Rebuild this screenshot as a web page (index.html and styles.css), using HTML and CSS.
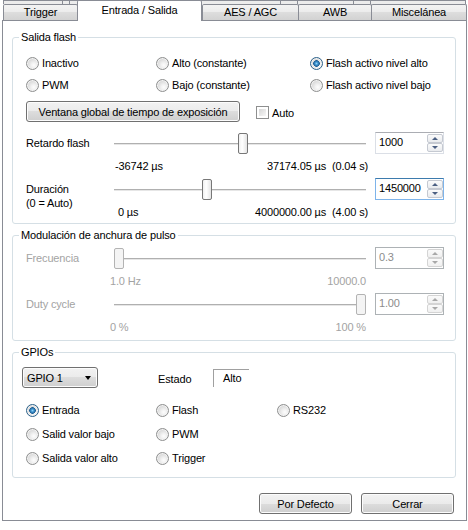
FILE: index.html
```html
<!DOCTYPE html>
<html lang="es">
<head>
  <meta charset="UTF-8" />
  <title>Entrada / Salida</title>
  <link rel="stylesheet" href="styles.css">
</head>
<body>

  <!-- Tabs -->
  <div class="tabbar">
    <div class="back-row">
      <span class="back-tab" style="width: 60px"></span>
      <span class="back-tab" style="width: 8px"></span>
      <span class="back-tab" style="width: 212px"></span>
      <span class="back-tab" style="width: 18px"></span>
      <span class="back-tab" style="width: 57px"></span>
      <span class="back-tab" style="width: 18px"></span>
      <span class="back-tab" style="width: 96px"></span>
    </div>
    <div class="tab-row">
      <div class="tab tab-trigger">Trigger</div>
      <div class="tab tab-active">Entrada / Salida</div>
      <div class="tab tab-aes">AES / AGC</div>
      <div class="tab tab-awb">AWB</div>
      <div class="tab tab-misc">Miscelánea</div>
    </div>
  </div>

  <div class="panel">

    <!-- Salida flash -->
    <div class="group group-flash">
      <div class="group-title">Salida flash</div>

      <div class="radio-grid flash-radios">
        <label class="radio"><span class="dot"></span>Inactivo</label>
        <label class="radio"><span class="dot"></span>Alto (constante)</label>
        <label class="radio"><span class="dot on"></span>Flash activo nivel alto</label>
        <label class="radio"><span class="dot"></span>PWM</label>
        <label class="radio"><span class="dot"></span>Bajo (constante)</label>
        <label class="radio"><span class="dot"></span>Flash activo nivel bajo</label>
      </div>

      <div class="button-row">
        <button class="btn btn-window">Ventana global de tiempo de exposición</button>
        <label class="check"><span class="box"></span>Auto</label>
      </div>

      <div class="slider-block first">
        <div class="slider-label">Retardo flash</div>
        <div class="slider-col">
          <div class="slider">
            <div class="track"></div>
            <div class="thumb" style="left: 124px"></div>
          </div>
          <div class="slider-values flash-values">
            <span>-36742 µs</span>
            <span>37174.05 µs&nbsp; (0.04 s)</span>
          </div>
        </div>
        <div class="spin">
          <span class="spin-value">1000</span>
          <span class="spin-buttons"><span class="spin-btn up"></span><span class="spin-btn down"></span></span>
        </div>
      </div>

      <div class="slider-block">
        <div class="slider-label">Duración<br>(0 = Auto)</div>
        <div class="slider-col">
          <div class="slider">
            <div class="track"></div>
            <div class="thumb" style="left: 88px"></div>
          </div>
          <div class="slider-values flash-values">
            <span class="zero">0 µs</span>
            <span>4000000.00 µs&nbsp; (4.00 s)</span>
          </div>
        </div>
        <div class="spin focused">
          <span class="spin-value">1450000</span>
          <span class="spin-buttons"><span class="spin-btn up"></span><span class="spin-btn down"></span></span>
        </div>
      </div>
    </div>

    <!-- PWM -->
    <div class="group group-pwm disabled">
      <div class="group-title">Modulación de anchura de pulso</div>

      <div class="slider-block first">
        <div class="slider-label">Frecuencia</div>
        <div class="slider-col">
          <div class="slider">
            <div class="track"></div>
            <div class="thumb" style="left: 0px"></div>
          </div>
          <div class="slider-values pwm-values">
            <span>1.0 Hz</span>
            <span>10000.0</span>
          </div>
        </div>
        <div class="spin">
          <span class="spin-value">0.3</span>
          <span class="spin-buttons"><span class="spin-btn up"></span><span class="spin-btn down"></span></span>
        </div>
      </div>

      <div class="slider-block">
        <div class="slider-label">Duty cycle</div>
        <div class="slider-col">
          <div class="slider">
            <div class="track"></div>
            <div class="thumb" style="left: 242px"></div>
          </div>
          <div class="slider-values pwm-values">
            <span>0 %</span>
            <span>100 %</span>
          </div>
        </div>
        <div class="spin">
          <span class="spin-value">1.00</span>
          <span class="spin-buttons"><span class="spin-btn up"></span><span class="spin-btn down"></span></span>
        </div>
      </div>
    </div>

    <!-- GPIOs -->
    <div class="group group-gpio">
      <div class="group-title">GPIOs</div>

      <div class="gpio-row">
        <div class="btn combo">GPIO 1<span class="combo-arrow"></span></div>
        <span class="state-label">Estado</span>
        <span class="state-box">Alto</span>
      </div>

      <div class="radio-grid gpio-radios">
        <label class="radio"><span class="dot on"></span>Entrada</label>
        <label class="radio"><span class="dot"></span>Flash</label>
        <label class="radio"><span class="dot"></span>RS232</label>
        <label class="radio"><span class="dot"></span>Salid valor bajo</label>
        <label class="radio"><span class="dot"></span>PWM</label>
        <span></span>
        <label class="radio"><span class="dot"></span>Salida valor alto</label>
        <label class="radio"><span class="dot"></span>Trigger</label>
        <span></span>
      </div>
    </div>

    <div class="footer">
      <button class="btn btn-footer">Por Defecto</button>
      <button class="btn btn-footer">Cerrar</button>
    </div>

  </div>

</body>
</html>
```

FILE: styles.css
```css
html, body {
  background: #fff;
}

body {
  margin: 0;
  font-family: "Liberation Sans", Arial, sans-serif;
  font-size: 11px;
  letter-spacing: -0.15px;
  color: #000;
}

/* Tabs */
.tabbar {
  height: 20px;
}

.back-row {
  display: flex;
  height: 4px;
  padding-left: 3px;
  overflow: hidden;
}

.back-tab {
  box-sizing: border-box;
  height: 4px;
  margin-right: -1px;
  border: 1px solid #898c95;
  border-bottom: none;
  background: #ececec;
}

.tab-row {
  display: flex;
  align-items: flex-start;
  height: 16px;
  padding-left: 3px;
}

.tab {
  box-sizing: border-box;
  height: 16px;
  line-height: 15px;
  text-align: center;
  border: 1px solid #898c95;
  border-bottom: none;
  border-radius: 2px 2px 0 0;
  background: linear-gradient(#f3f3f3, #ebebeb 50%, #dddddd 50%, #d2d2d2);
}

.tab-trigger { width: 75px; }
.tab-aes { width: 97px; }
.tab-awb { width: 74px; margin-left: -1px; }
.tab-misc { width: 96px; margin-left: -1px; }

.tab-active {
  position: relative;
  z-index: 1;
  width: 125px;
  height: 21px;
  margin: -4px 0 -1px -1px;
  line-height: 19px;
  background: #fff;
}

/* Panel */
.panel {
  box-sizing: border-box;
  width: 465px;
  margin-left: 2px;
  padding: 16px 10px 6px 9px;
  border: 1px solid #898c95;
  background: #fff;
}

.group {
  border: 1px solid #d5dfe5;
  border-radius: 3px;
  padding: 0 0 4px 13px;
}

.group-pwm {
  margin-top: 11px;
  padding-bottom: 6px;
}

.group-gpio {
  margin-top: 11px;
  padding-bottom: 7px;
}

.group-title {
  width: fit-content;
  margin: -7px 0 0 -7px;
  padding: 0 2px;
  line-height: 13px;
  background: #fff;
}

/* Radios and checkbox */
.radio-grid {
  display: grid;
}

.flash-radios {
  grid-template-columns: 130px 154px auto;
  grid-auto-rows: 22px;
  margin-top: 8px;
}

.gpio-radios {
  grid-template-columns: 130px 121px auto;
  grid-auto-rows: 24px;
  margin-top: 10px;
}

.radio, .check {
  display: flex;
  align-items: center;
  white-space: nowrap;
}

.dot {
  box-sizing: border-box;
  width: 13px;
  height: 13px;
  margin-right: 3px;
  border: 1px solid #8e8f8f;
  border-radius: 50%;
  background: radial-gradient(circle at 62% 65%, #fdfdfd 0, #f2f2f2 25%, #d3d3d3 75%, #c9c9c9);
  box-shadow: inset 0 0 0 1px #f3f3f3;
}

.dot.on {
  border-color: #2c628b;
  background:
    radial-gradient(circle at 50% 50%, #8fd3f7 0, #3f93cf 1.5px, #1f5f94 3px, transparent 3.6px),
    radial-gradient(circle at 62% 65%, #fdfdfd 0, #f2f2f2 25%, #d3d3d3 75%, #c9c9c9);
}

.check {
  margin-left: 16px;
  padding-top: 2px;
}

.box {
  box-sizing: border-box;
  width: 13px;
  height: 13px;
  margin-right: 3px;
  padding: 2px;
  border: 1px solid #8e8f8f;
  background: linear-gradient(135deg, #d6d6d6, #f8f8f8) content-box, #fff;
}

/* Buttons */
.btn {
  box-sizing: border-box;
  height: 21px;
  padding: 0;
  font: inherit;
  letter-spacing: inherit;
  color: #000;
  border: 1px solid #707070;
  border-radius: 3px;
  background: linear-gradient(#f2f2f2, #ebebeb 50%, #dddddd 50%, #cfcfcf);
  box-shadow: inset 0 0 0 1px #fcfcfc;
}

.button-row {
  display: flex;
  align-items: center;
  margin-top: 5px;
}

.btn-window {
  width: 214px;
}

/* Sliders */
.slider-block {
  display: grid;
  grid-template-columns: 88px 252px 78px;
  margin-top: 5px;
}

.slider-block.first {
  margin-top: 10px;
}

.group-pwm .slider-block.first {
  margin-top: 5px;
}

.slider-label {
  margin-top: 4px;
  line-height: 14px;
  white-space: nowrap;
}

.slider {
  position: relative;
  height: 11px;
  padding-top: 11px;
}

.track {
  height: 1px;
  background: #b0b0b0;
  border-bottom: 1px solid #e6e6e6;
}

.thumb {
  position: absolute;
  top: 1px;
  box-sizing: border-box;
  width: 10px;
  height: 21px;
  border: 1px solid #777;
  border-radius: 2px;
  background: linear-gradient(90deg, #f0f0f0, #fff 40%, #e4e4e4);
}

.slider-values {
  display: flex;
  justify-content: space-between;
  margin-top: 5px;
  line-height: 14px;
  white-space: nowrap;
}

.flash-values {
  margin-left: 1px;
  margin-right: -2px;
}

.flash-values .zero {
  margin-left: 3px;
}

.pwm-values {
  margin-left: -4px;
}

/* Spin boxes */
.spin {
  box-sizing: border-box;
  display: flex;
  align-items: flex-start;
  width: 69px;
  height: 22px;
  margin-left: 9px;
  border: 1px solid #dbdfe6;
  border-top-color: #abadb3;
  background: #fff;
}

.spin.focused {
  border-color: #7eb4ea;
  border-top-color: #3d7bad;
}

.spin-value {
  padding-left: 3px;
  line-height: 19px;
}

.spin-buttons {
  display: flex;
  flex-direction: column;
  margin: 1px 0 0 auto;
}

.spin-btn {
  box-sizing: border-box;
  display: flex;
  align-items: center;
  justify-content: center;
  width: 16px;
  height: 9px;
  border: 1px solid #c5c9d1;
  border-radius: 2px;
  background: linear-gradient(#fbfbfb, #e9ebee);
}

.spin-btn::after {
  content: "";
  border-left: 3px solid transparent;
  border-right: 3px solid transparent;
}

.spin-btn.up::after {
  border-bottom: 3px solid #4b5f82;
}

.spin-btn.down::after {
  border-top: 3px solid #4b5f82;
}

/* Disabled group */
.disabled .slider-label,
.disabled .slider-values {
  color: #a3a3a3;
}

.disabled .spin {
  border-color: #adb2b5;
}

.disabled .spin-value {
  color: #8c8c8c;
}

.disabled .spin-btn {
  border-color: #d4d4d4;
  background: linear-gradient(#fafafa, #f0f0f0);
}

.disabled .spin-btn.up::after {
  border-bottom-color: #a8a8a8;
}

.disabled .spin-btn.down::after {
  border-top-color: #a8a8a8;
}

.disabled .thumb {
  border-color: #b3b3b3;
  background: #f4f4f4;
}

/* GPIO row */
.gpio-row {
  display: flex;
  align-items: center;
  margin-top: 8px;
}

.combo {
  display: flex;
  align-items: center;
  width: 76px;
  margin-left: -4px;
  padding-left: 4px;
}

.combo-arrow {
  margin-left: auto;
  margin-right: 6px;
  border-left: 3px solid transparent;
  border-right: 3px solid transparent;
  border-top: 4px solid #000;
}

.state-label {
  width: 55px;
  margin-left: 60px;
  padding-top: 2px;
}

.state-box {
  box-sizing: border-box;
  width: 36px;
  height: 18px;
  padding-left: 9px;
  line-height: 16px;
  border-top: 1px solid #a0a0a0;
  border-left: 1px solid #a0a0a0;
}

/* Footer */
.footer {
  display: flex;
  justify-content: flex-end;
  gap: 9px;
  margin: 15px 2px 0 0;
}

.btn-footer {
  width: 93px;
}
```
